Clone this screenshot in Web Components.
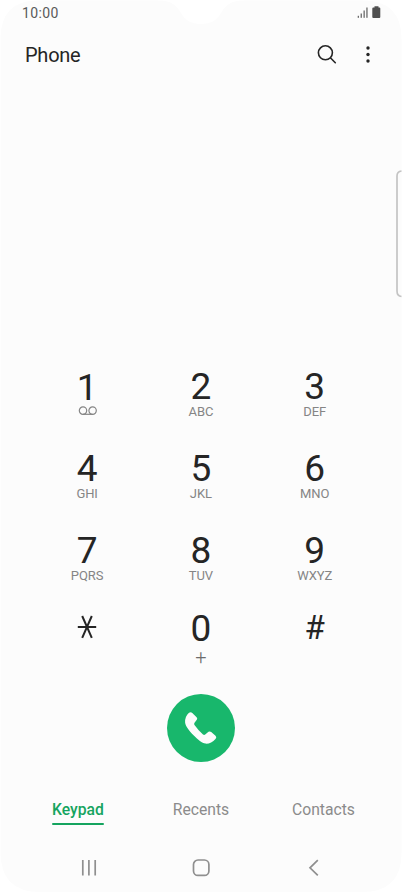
<!DOCTYPE html>
<html lang="en">
<head>
<meta charset="utf-8">
<title>Phone</title>
<style>
html,body{margin:0;background:#fff;font-family:Roboto,"Liberation Sans",sans-serif}
</style>
</head>
<body>
<phone-screen>
  <status-bar slot="status">10:00</status-bar>
  <app-header slot="header">Phone</app-header>
  <dial-pad slot="main">
    <dial-key letters="voicemail">1</dial-key>
    <dial-key letters="ABC">2</dial-key>
    <dial-key letters="DEF">3</dial-key>
    <dial-key letters="GHI">4</dial-key>
    <dial-key letters="JKL">5</dial-key>
    <dial-key letters="MNO">6</dial-key>
    <dial-key letters="PQRS">7</dial-key>
    <dial-key letters="TUV">8</dial-key>
    <dial-key letters="WXYZ">9</dial-key>
    <dial-key kind="star"></dial-key>
    <dial-key kind="zero" letters="+">0</dial-key>
    <dial-key kind="hash">#</dial-key>
  </dial-pad>
  <call-button slot="main"></call-button>
  <tab-bar slot="main">
    <tab-item active>Keypad</tab-item>
    <tab-item>Recents</tab-item>
    <tab-item>Contacts</tab-item>
  </tab-bar>
  <nav-bar slot="main"></nav-bar>
</phone-screen>
<script>
const define = (name, html) => customElements.define(name, class extends HTMLElement {
  constructor() {
    super();
    this.attachShadow({ mode: 'open' }).innerHTML = typeof html === 'function' ? html(this) : html;
  }
});

define('phone-screen', `<style>
:host{display:flex;flex-direction:column;position:relative;width:402px;height:893px;overflow:hidden}
.bg{position:absolute;left:0;top:0}
.edge{position:absolute;left:396px;top:170px}
::slotted(*){position:relative;flex:none}
</style>
<svg class="bg" width="402" height="893"><path fill="#fcfcfc" d="M38 .5H158C172 .5 177 6 181 13C185 20 191 24 201 24C211 24 217 20 221 13C225 6 230 .5 244 .5H363Q401.500 .5 401.500 39V853Q401.500 892 362 892H40Q.5 892 .5 852V39Q.5 .5 38 .5Z"/></svg>
<svg class="edge" width="6" height="128"><path d="M5.500 1Q1 1.500 1 6V121Q1 126 5.500 126.500" fill="none" stroke="#c4c4c4" stroke-width="1.700"/></svg>
<slot name="status"></slot><slot name="header"></slot><slot name="main"></slot>`);

define('status-bar', `<style>
:host{display:flex;justify-content:space-between;align-items:flex-start;height:26px;padding:4px 21px 0 22px;box-sizing:border-box;font-size:14px;line-height:18px;color:#5a5a5a;letter-spacing:.35px}
svg{margin-top:2px}
</style><slot></slot>
<svg width="24" height="13" fill="#505050"><g fill="#6a6a6a"><rect x=".7" y="9.800" width="1.300" height="2"/><rect x="3.600" y="7.500" width="1.300" height="4.300"/><rect x="6.500" y="4.500" width="1.300" height="7.300"/><rect x="9.300" y="1.500" width="1.300" height="10.300"/></g><path d="M17.500 .3H21.500V1.500H22.300Q23.300 1.500 23.300 2.500V11Q23.300 12 22.300 12H16.300Q15.300 12 15.300 11V2.500Q15.300 1.500 16.300 1.500H17.500Z"/></svg>`);

define('app-header', `<style>
:host{display:flex;align-items:center;height:58px;padding:0 31px 0 25px;box-sizing:border-box;font-size:20px;line-height:24px;letter-spacing:-.25px;color:#252525}
.search{margin-left:auto;margin-right:27px}
</style><slot></slot>
<svg class="search" width="22" height="22" fill="none" stroke="#252525" stroke-width="1.600" stroke-linecap="round"><circle cx="9.400" cy="8.800" r="7"/><path d="M14.600 14L19.300 18.700"/></svg>
<svg width="6" height="20" fill="#252525"><circle cx="3" cy="3" r="1.700"/><circle cx="3" cy="9.500" r="1.700"/><circle cx="3" cy="16" r="1.700"/></svg>`);

define('dial-pad', `<style>
:host{display:grid;grid-template-columns:repeat(3,113.800px);grid-template-rows:82px 82px 78px 80px;margin:284px 0 0 30.200px;height:322px}
</style><slot></slot>`);

define('dial-key', el => {
  const kind = el.getAttribute('kind'), letters = el.getAttribute('letters') || '';
  const sub = letters === 'voicemail'
    ? `<svg class="vm" width="20" height="10" fill="none" stroke="#858585" stroke-width="1.200"><circle cx="5" cy="4.600" r="3.700"/><circle cx="14.600" cy="4.600" r="3.700"/><path d="M5 8.300H14.600"/></svg>`
    : kind === 'zero' ? `<span class="sub plus">${letters}</span>` : `<span class="sub">${letters}</span>`;
  const main = kind === 'star'
    ? `<svg class="star" width="20" height="24" fill="none" stroke="#252525" stroke-width="2"><path d="M.8 11.900H19.200M5.200 1L14.800 22.800M14.800 1L5.200 22.800"/></svg>`
    : `<span class="num"><slot></slot></span>`;
  return `<style>
:host{display:flex;flex-direction:column;align-items:center;color:#252525}
.num{font-size:37px;line-height:38px}
.sub{font-size:13px;line-height:12px;color:#858585;letter-spacing:-.1px}
:host([letters="voicemail"]) .num{padding-top:1px}
.vm{margin-top:-1.500px;margin-left:1px}
.sub.plus{font-size:20px;line-height:18px;margin-top:0;font-weight:300;color:#6c6c6c}
:host([kind="hash"]) .num{font-size:33px;line-height:36px}
.star{margin-top:5px}
</style>${main}${sub}`;
});

define('call-button', `<style>
:host{display:grid;width:68px;height:68px;margin:4px 0 0 167px;border-radius:50%;background:#18b76c;place-items:center}
</style><svg width="34" height="34" fill="#fcfcfc"><path d="M5 1.800Q6.800.6 8.300 2L12.600 6.200Q13.800 7.400 12.800 8.800L10.500 11.700Q9.700 12.900 10.500 14.100Q14 19.200 19 23.400Q20.100 24.300 21.200 23.500L24.500 20.800Q25.900 19.900 27.200 21L31.500 24.700Q33 26.200 31.700 27.700C28.500 31.300 25 32.900 21.500 32.600C18 32.300 14 28.700 9.800 24.500C5 19.700 1.600 15.300 1.100 11.500Q.8 5.500 5 1.800Z"/></svg>`);

define('tab-bar', `<style>
:host{display:grid;grid-template-columns:52px 194px 51px;justify-items:center;margin:37px 0 0 52px;height:28px}
</style><slot></slot>`);

define('tab-item', `<style>
:host{display:block;font-size:15.700px;line-height:21px;white-space:nowrap;color:#8b8b8b}
:host([active]){font-weight:500;color:#15a45f}
:host([active])::after{content:"";display:block;width:52px;height:2.500px;margin-top:2.500px;border-radius:1px;background:#15a45f}
</style><slot></slot>`);

define('nav-bar', `<style>
:host{display:grid;grid-template-columns:112px 115px auto;align-items:center;margin:32px 0 0 80px;height:18px}
svg{display:block}
</style>
<svg width="18" height="18" stroke="#8f8f8f" stroke-width="1.700"><path d="M2.800 1V16.500M8.900 1V16.500M15.200 1V16.500"/></svg>
<svg width="18" height="18" fill="none" stroke="#8f8f8f" stroke-width="1.700"><rect x="1.500" y="1" width="15.400" height="15.400" rx="4.500"/></svg>
<svg width="12" height="18" fill="none" stroke="#8f8f8f" stroke-width="1.700"><path d="M10.800 1.200L3 8.800L10.800 16.400"/></svg>`);
</script>
</body>
</html>
